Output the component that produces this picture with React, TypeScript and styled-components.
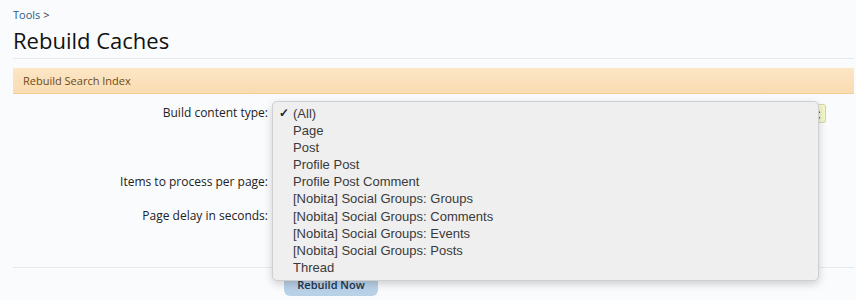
import React from 'react';
import styled, { createGlobalStyle } from 'styled-components';

const GlobalStyle = createGlobalStyle`
  body {
    margin: 0;
    background: #fafbfd;
    font-family: 'Open Sans', 'DejaVu Sans', sans-serif;
    color: #222;
  }
`;

const Page = styled.div`
  padding: 8px 2px 0 13px;
  height: 300px;
  box-sizing: border-box;
  overflow: hidden;
`;

const Breadcrumb = styled.div`
  font-size: 11px;
  line-height: 14px;
  color: #2b5d86;
  height: 14px;
  span {
    color: #333;
    margin-left: 3px;
  }
`;

const Title = styled.h1`
  margin: 4px 0 0;
  padding-bottom: 4px;
  font-size: 22px;
  line-height: 28px;
  font-weight: 400;
  color: #111;
  border-bottom: 1px solid #e3eaf0;
`;

const SectionBar = styled.div`
  margin-top: 9px;
  height: 25px;
  padding: 0 10px;
  display: flex;
  align-items: center;
  font-size: 11px;
  color: #6b4a17;
  background: linear-gradient(#fde6c6, #f9dcb1);
  border-bottom: 1px solid #f5cd94;
`;

const Form = styled.div`
  display: grid;
  grid-template-columns: 255px 1fr;
  column-gap: 4px;
  padding-top: 7px;
`;

const Label = styled.div<{ $top: number }>`
  text-align: right;
  font-size: 12px;
  line-height: 16px;
  color: #222;
  padding-top: ${({ $top }) => $top}px;
`;

const Control = styled.div<{ $h: number }>`
  position: relative;
  height: ${({ $h }) => $h}px;
`;

const SelectBox = styled.div`
  margin-top: 3px;
  width: 554px;
  height: 19px;
  display: flex;
  justify-content: flex-end;
`;

const SelectEnd = styled.div`
  width: 9px;
  height: 17px;
  background: #f4f7c9;
  border: 1px solid #d4d8b0;
  border-left: none;
  border-radius: 0 3px 3px 0;
  font-size: 8px;
  line-height: 8px;
  color: #444;
  display: flex;
  flex-direction: column;
  justify-content: center;
`;

const Menu = styled.ul`
  position: absolute;
  left: 0;
  top: 0;
  width: 545px;
  margin: 0;
  padding: 3px 0 4px;
  list-style: none;
  background: #efefef;
  border: 1px solid #d0d0d0;
  border-radius: 5px;
  box-shadow: 0 3px 8px rgba(0, 0, 0, 0.18);
  z-index: 2;
  font-family: 'Liberation Sans', Arial, sans-serif;
  font-size: 13px;
  color: #3a3a3a;
`;

const Option = styled.li`
  position: relative;
  height: 17.1px;
  line-height: 17px;
  padding-left: 20px;
`;

const Check = styled.span`
  position: absolute;
  left: 6px;
  top: 0;
  font-size: 12px;
  font-weight: 700;
  color: #222;
`;

const Footer = styled.div`
  margin-top: 25px;
  border-top: 1px solid #e3eaf0;
  padding: 4px 0 0 271px;
`;

const Button = styled.button`
  width: 94px;
  height: 22px;
  border: none;
  border-radius: 0 0 6px 6px;
  background: #b9d1e7;
  color: #1c3550;
  font-family: 'Open Sans', 'DejaVu Sans', sans-serif;
  font-size: 11px;
  font-weight: 600;
  padding-top: 1px;
`;

const options = [
  '(All)',
  'Page',
  'Post',
  'Profile Post',
  'Profile Post Comment',
  '[Nobita] Social Groups: Groups',
  '[Nobita] Social Groups: Comments',
  '[Nobita] Social Groups: Events',
  '[Nobita] Social Groups: Posts',
  'Thread',
];

export default function App() {
  return (
    <>
      <GlobalStyle />
      <Page>
        <Breadcrumb>
          Tools<span>&gt;</span>
        </Breadcrumb>
        <Title>Rebuild Caches</Title>
        <SectionBar>Rebuild Search Index</SectionBar>
        <Form>
          <Label $top={4}>Build content type:</Label>
          <Control $h={69}>
            <SelectBox>
              <SelectEnd>
                <span>▴</span>
                <span>▾</span>
              </SelectEnd>
            </SelectBox>
            <Menu>
              {options.map((o, i) => (
                <Option key={o}>
                  {i === 0 && <Check>✓</Check>}
                  {o}
                </Option>
              ))}
            </Menu>
          </Control>
          <Label $top={4}>Items to process per page:</Label>
          <Control $h={38} />
          <Label $top={0}>Page delay in seconds:</Label>
          <Control $h={34} />
        </Form>
        <Footer>
          <Button>Rebuild Now</Button>
        </Footer>
      </Page>
    </>
  );
}
